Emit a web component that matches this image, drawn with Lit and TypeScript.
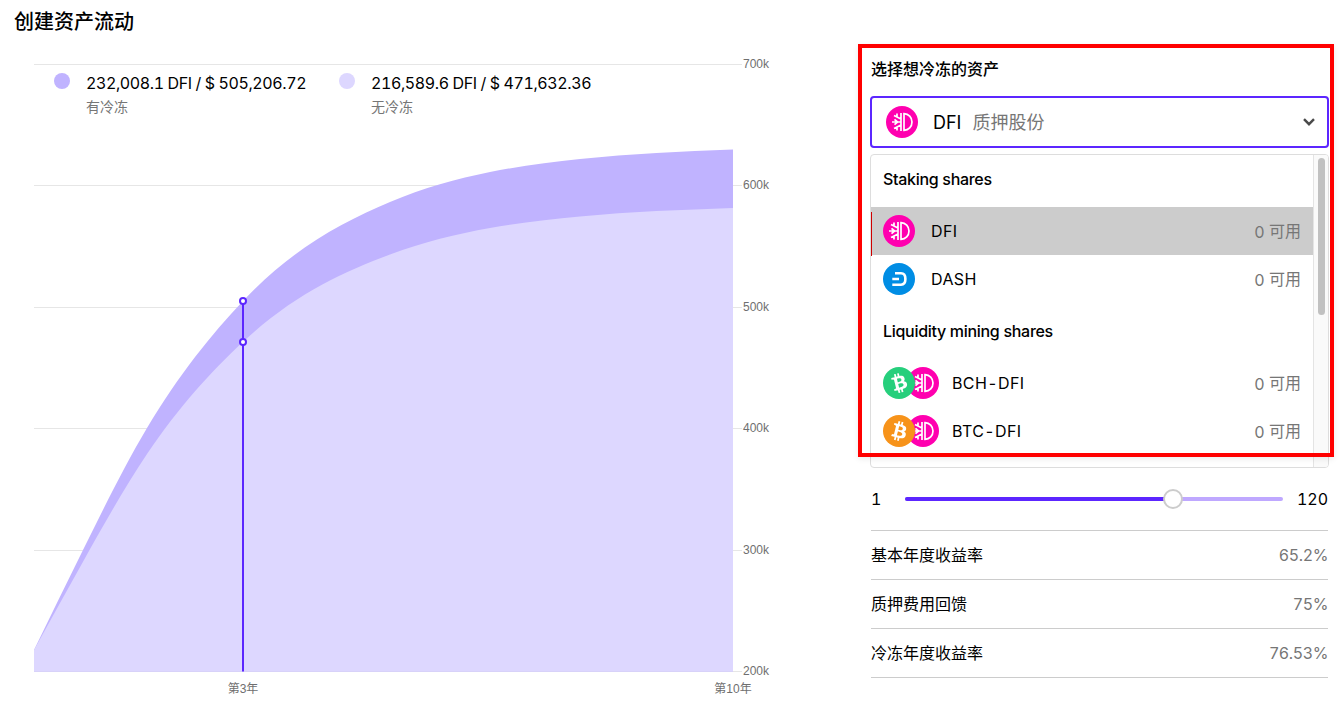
import {css, html, svg, LitElement} from 'lit';
import {customElement} from 'lit/decorators.js';

// knots of the "with lock" curve: x, y, slope
const knots: [number, number, number][] = [
  [34, 650, -2.06],
  [83, 550, -2.02],
  [147, 428, -1.68],
  [243, 301, -1.06],
  [390, 202, -0.42],
  [490, 172, -0.2],
  [580, 159, -0.105],
  [733, 149.5, -0.04],
];

// the lower curve is the same growth scaled down around the start value
const area = (scale: number) => {
  const sy = (y: number) => 650 - (650 - y) * scale;
  let d = `M34 671.5L34 650`;
  for (let i = 0; i < knots.length - 1; i++) {
    const [x1, y1, m1] = knots[i];
    const [x2, y2, m2] = knots[i + 1];
    const h = (x2 - x1) / 3;
    d += `C${x1 + h} ${sy(y1 + m1 * h)} ${x2 - h} ${sy(y2 - m2 * h)} ${x2} ${sy(y2)}`;
  }
  return d + 'L733 671.5Z';
};

const BTC_PATH = 'M23.189 14.02c.314-2.096-1.283-3.223-3.465-3.975l.708-2.84-1.728-.43-.69 2.765c-.454-.114-.92-.22-1.385-.326l.695-2.783L15.596 6l-.708 2.839c-.376-.086-.746-.17-1.104-.26l.002-.009-2.384-.595-.46 1.846s1.283.294 1.256.312c.7.175.826.638.805 1.006l-.806 3.235c.048.012.11.03.18.057l-.183-.045-1.13 4.532c-.086.212-.303.531-.793.41.018.025-1.256-.313-1.256-.313l-.858 1.978 2.25.561c.418.105.828.215 1.231.318l-.715 2.872 1.727.43.708-2.84c.472.127.93.245 1.378.357l-.706 2.828 1.728.43.715-2.866c2.948.558 5.164.333 6.097-2.333.752-2.146-.037-3.385-1.588-4.192 1.13-.26 1.98-1.003 2.207-2.538zm-3.95 5.538c-.533 2.147-4.148.986-5.32.695l.95-3.805c1.172.293 4.929.872 4.37 3.11zm.535-5.569c-.487 1.953-3.495.96-4.47.717l.86-3.45c.975.243 4.118.696 3.61 2.733z';

const icons: Record<string, unknown> = {
  DFI: svg`<circle cx="16" cy="16" r="16" fill="#ff00af"/>
    <g fill="none" stroke="#fff" stroke-width="1.7">
      <path d="M18 7.6c4.6.2 8 3.7 8 8.4s-3.4 8.2-8 8.4z"/>
      <path d="M15 7v18M15 16H6M15 13L8 9.4M15 19L8 22.6M11 10.8V7.4M11 21.2v3.4M11.5 16l-3-2.6M11.5 16l-3 2.6"/>
    </g>`,
  DASH: svg`<circle cx="16" cy="16" r="16" fill="#008de4"/>
    <g fill="none" stroke="#fff" stroke-width="2.6">
      <path d="M12 10.3h6c2.8 0 4.4 2.3 4.4 5.7s-1.6 5.7-4.4 5.7H9.3"/>
      <path d="M9.3 16h6.7"/>
    </g>`,
  BCH: svg`<circle cx="16" cy="16" r="16" fill="#26cf7c"/>
    <path fill="#fff" transform="rotate(-28 16 16)" d=${BTC_PATH}/>`,
  BTC: svg`<circle cx="16" cy="16" r="16" fill="#f7931a"/>
    <path fill="#fff" d=${BTC_PATH}/>`,
};

const coin = (name: string) =>
  html`<svg class="coin" viewBox="0 0 32 32" width="32" height="32">${icons[name]}</svg>`;

const ticks = [
  {y: 64.5, label: '700k'},
  {y: 185.5, label: '600k'},
  {y: 307.5, label: '500k'},
  {y: 428.5, label: '400k'},
  {y: 550.5, label: '300k'},
  {y: 671.5, label: '200k'},
];

const legend = [
  {color: '#c0b3ff', value: '232,008.1 DFI / $ 505,206.72', note: '有冷冻'},
  {color: '#ddd7ff', value: '216,589.6 DFI / $ 471,632.36', note: '无冷冻'},
];

const stats = [
  {label: '基本年度收益率', value: '65.2%'},
  {label: '质押费用回馈', value: '75%'},
  {label: '冷冻年度收益率', value: '76.53%'},
];

@customElement('app-root')
export class AppRoot extends LitElement {
  static override styles = css`
    :host {
      display: block;
      position: relative;
      height: 707px;
      overflow: hidden;
      background: #fff;
      color: #000;
      font-family: Inter, 'Noto Sans CJK SC', sans-serif;
      font-size: 16px;
      font-variant-numeric: tabular-nums;
    }

    .cjk {
      padding-bottom: 2px;
      font-family: 'Noto Sans CJK SC', sans-serif;
      line-height: 22px;
    }

    .page {
      padding: 0 14px;
    }

    h1 {
      margin: 0;
      font-size: 20px;
      font-weight: 500;
      line-height: 44px;
    }

    .body {
      display: flex;
      justify-content: space-between;
    }

    .chart {
      position: relative;
      width: 760px;
      height: 663px;
    }

    .chart svg {
      display: block;
    }

    .axis {
      font-family: 'Liberation Sans', 'Noto Sans CJK SC', sans-serif;
      font-size: 12px;
      fill: #6f6f6f;
    }

    .legend {
      position: absolute;
      left: 40px;
      top: 27px;
      display: flex;
    }

    .legend-item {
      display: flex;
      width: 285px;
      gap: 16px;
    }

    .dot {
      width: 16px;
      height: 16px;
      margin-top: 2px;
      border-radius: 50%;
    }

    .legend-value {
      line-height: 24px;
      letter-spacing: -0.4px;
    }

    .legend-note {
      color: #767676;
      font-size: 14px;
    }

    .panel {
      display: flex;
      flex-direction: column;
      width: 459px;
      padding-top: 13px;
    }

    .panel-label {
      margin-left: 1px;
      font-weight: 500;
    }

    .select {
      display: flex;
      align-items: center;
      box-sizing: border-box;
      height: 52px;
      margin-top: 15px;
      padding: 0 12px 0 14px;
      border: 2px solid #5c26ff;
      border-radius: 4px;
      font-size: 18px;
    }

    .select .coin {
      margin-right: 15px;
    }

    .select .sub {
      margin-left: 11px;
      color: #767676;
    }

    .chevron {
      margin-left: auto;
    }

    .menu {
      position: relative;
      display: flex;
      box-sizing: border-box;
      height: 314px;
      margin-top: 6px;
      border: 1px solid #ddd;
      border-radius: 4px;
      overflow: hidden;
    }

    .menu-list {
      flex: 1;
    }

    .menu-head {
      padding: 0 12px;
      font-weight: 500;
      line-height: 24px;
      letter-spacing: -0.3px;
    }

    .menu-head.first {
      margin-top: 12px;
      margin-bottom: 16px;
    }

    .menu-head.next {
      margin-top: 16px;
      margin-bottom: 16px;
    }

    .menu-row {
      display: flex;
      align-items: center;
      height: 48px;
      padding: 0 12px;
    }

    .menu-row.active {
      background: #ccc;
    }

    .menu-row .name {
      letter-spacing: 0.4px;
    }

    .menu-row .count {
      margin-left: auto;
      padding-bottom: 2px;
      color: #767676;
    }

    .count-unit {
      font-family: 'Noto Sans CJK SC', sans-serif;
      vertical-align: 1px;
    }

    .coins {
      display: flex;
      margin-right: 16px;
    }

    .coins.pair {
      margin-right: 13px;
    }

    .coins .coin + .coin {
      margin-left: -8px;
    }

    .coins .coin:first-child {
      position: relative;
      z-index: 1;
    }

    .track {
      box-sizing: border-box;
      width: 15px;
      padding: 3px 3px 0 4px;
      border-left: 1px solid #e4e4e4;
      background: #fafafa;
    }

    .thumb {
      height: 157px;
      border-radius: 4px;
      background: #c1c1c1;
    }

    .mark {
      position: absolute;
      left: 0;
      top: 57px;
      width: 1px;
      height: 44px;
      background: #d00000;
    }

    .slider {
      display: flex;
      align-items: center;
      height: 24px;
      margin-top: 19px;
      padding: 0 1px;
    }

    .slider-min {
      width: 34px;
    }

    .slider-max {
      width: 45px;
      text-align: right;
    }

    .slider-rail {
      position: relative;
      flex: 1;
      height: 4px;
      border-radius: 2px;
      background: #bfa8ff;
    }

    .slider-fill {
      height: 100%;
      border-radius: 2px 0 0 2px;
      background: #5c26ff;
    }

    .slider-knob {
      position: absolute;
      top: -8px;
      box-sizing: border-box;
      width: 20px;
      height: 20px;
      margin-left: -10px;
      border: 2px solid #ccc;
      border-radius: 50%;
      background: #fff;
    }

    .stats {
      margin: 19px 1px 0;
      border-top: 1px solid #ccc;
    }

    .stat {
      display: flex;
      align-items: center;
      justify-content: space-between;
      box-sizing: border-box;
      height: 49px;
      border-bottom: 1px solid #ccc;
    }

    .stat-value {
      color: #767676;
      letter-spacing: -0.4px;
    }

    .highlight {
      position: absolute;
      left: 858px;
      top: 44.4px;
      box-sizing: border-box;
      width: 476px;
      height: 412.3px;
      border: 4.6px solid #f00;
      box-shadow: 0 2px 6px rgba(0, 0, 0, 0.08);
      pointer-events: none;
    }
  `;

  private renderChart() {
    return html`
      <div class="chart">
        <svg viewBox="14 44 760 663" width="760" height="663">
          ${ticks.map((t, i) => svg`
            <line x1="34" x2="742" y1=${t.y} y2=${t.y} stroke="#e6e6e6"/>
            <text class="axis" x="743" y=${68 + i * 121.4}>${t.label}</text>
          `)}
          <path d=${area(1)} fill="#c0b3ff"/>
          <path d=${area(0.883)} fill="#ddd7ff"/>
          <line x1="243" x2="243" y1="301" y2="671.5" stroke="#5c26ff" stroke-width="2"/>
          <circle cx="243" cy="301" r="3" fill="#fff" stroke="#5c26ff" stroke-width="2"/>
          <circle cx="243" cy="342" r="3" fill="#fff" stroke="#5c26ff" stroke-width="2"/>
          <text class="axis" x="243" y="693" text-anchor="middle">第3年</text>
          <text class="axis" x="733" y="693" text-anchor="middle">第10年</text>
        </svg>
        <div class="legend">
          ${legend.map(l => html`
            <div class="legend-item">
              <span class="dot" style="background:${l.color}"></span>
              <div>
                <div class="legend-value">${l.value}</div>
                <div class="legend-note cjk">${l.note}</div>
              </div>
            </div>
          `)}
        </div>
      </div>
    `;
  }

  private renderRow(names: string[], label: string, active = false) {
    return html`
      <div class="menu-row ${active ? 'active' : ''}">
        <span class="coins ${names.length > 1 ? 'pair' : ''}">${names.map(coin)}</span>
        <span class="name">${label}</span>
        <span class="count">0 <span class="count-unit">可用</span></span>
      </div>
    `;
  }

  private renderPanel() {
    return html`
      <div class="panel">
        <div class="panel-label cjk">选择想冷冻的资产</div>
        <div class="select">
          ${coin('DFI')}
          <span>DFI</span>
          <span class="sub cjk">质押股份</span>
          <svg class="chevron" viewBox="0 0 12 8" width="12" height="8">
            <path d="M1 1.2l5 5 5-5" fill="none" stroke="#4a4a4a" stroke-width="2.4"/>
          </svg>
        </div>
        <div class="menu">
          <span class="mark"></span>
          <div class="menu-list">
            <div class="menu-head first">Staking shares</div>
            ${this.renderRow(['DFI'], 'DFI', true)}
            ${this.renderRow(['DASH'], 'DASH')}
            <div class="menu-head next">Liquidity mining shares</div>
            ${this.renderRow(['BCH', 'DFI'], 'BCH-DFI')}
            ${this.renderRow(['BTC', 'DFI'], 'BTC-DFI')}
          </div>
          <div class="track"><div class="thumb"></div></div>
        </div>
        <div class="slider">
          <span class="slider-min">1</span>
          <div class="slider-rail">
            <div class="slider-fill" style="width:${(268 / 378) * 100}%"></div>
            <div class="slider-knob" style="left:${(268 / 378) * 100}%"></div>
          </div>
          <span class="slider-max">120</span>
        </div>
        <div class="stats">
          ${stats.map(s => html`
            <div class="stat">
              <span class="cjk">${s.label}</span>
              <span class="stat-value">${s.value}</span>
            </div>
          `)}
        </div>
      </div>
    `;
  }

  override render() {
    return html`
      <div class="page">
        <h1>创建资产流动</h1>
        <div class="body">
          ${this.renderChart()}
          ${this.renderPanel()}
        </div>
      </div>
      <div class="highlight"></div>
    `;
  }
}

declare global {
  interface HTMLElementTagNameMap {
    'app-root': AppRoot;
  }
}
